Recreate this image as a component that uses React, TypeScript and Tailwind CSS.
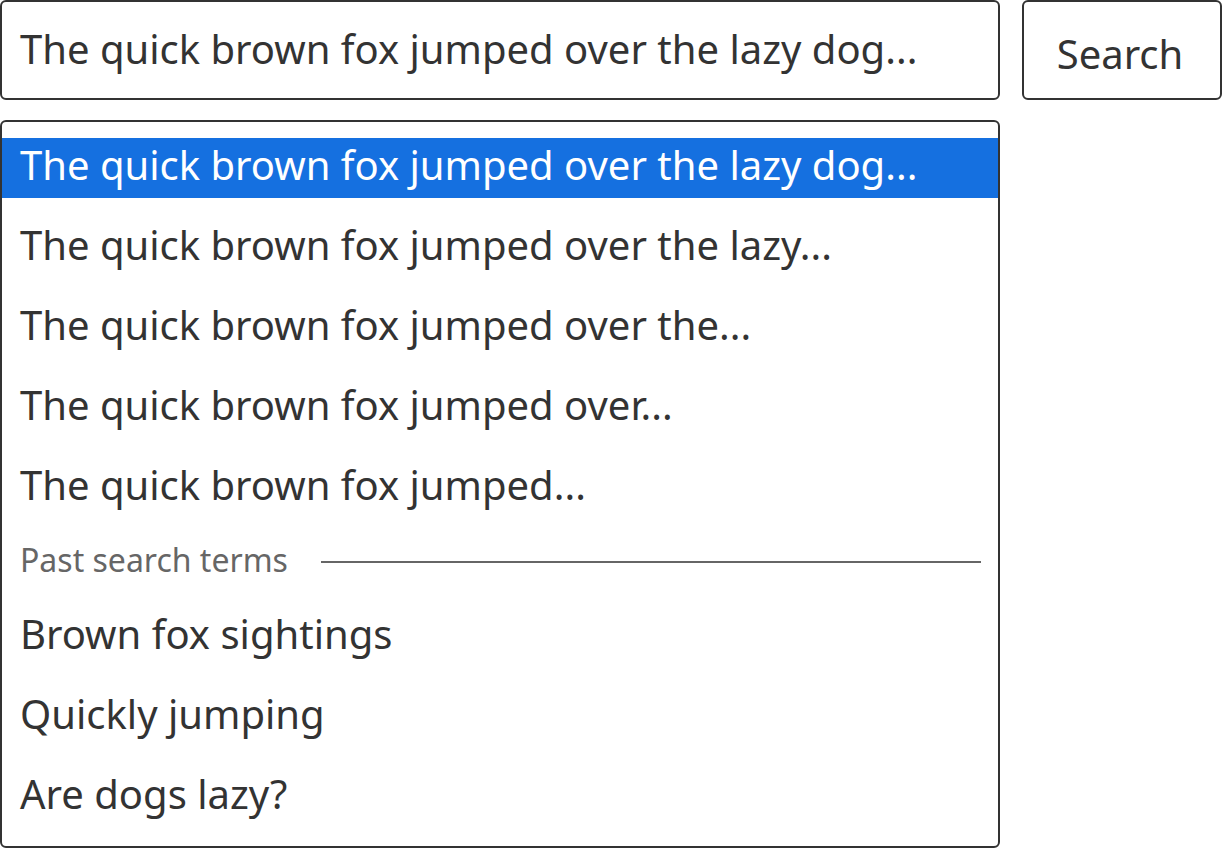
const suggestions = [
  "The quick brown fox jumped over the lazy dog...",
  "The quick brown fox jumped over the lazy...",
  "The quick brown fox jumped over the...",
  "The quick brown fox jumped over...",
  "The quick brown fox jumped...",
];

const pastTerms = ["Brown fox sightings", "Quickly jumping", "Are dogs lazy?"];

export default function App() {
  return (
    <div
      className="flex h-[848px] w-[1222px] gap-[22px] bg-white text-[#333]"
      style={{ fontFamily: '"Noto Sans", "Open Sans", sans-serif' }}
    >
      <div className="flex w-[1000px] flex-col gap-5">
        {/* 入力欄 */}
        <div className="flex h-[100px] items-center rounded-md border-2 border-[#333] px-[18px] pb-[2px] text-[40px]">
          The quick brown fox jumped over the lazy dog...
        </div>

        {/* 候補リスト */}
        <div className="flex flex-1 flex-col gap-5 rounded-md border-2 border-[#333] pt-4 pb-[18px]">
          {suggestions.map((s, i) => (
            <div
              key={s}
              className={
                i === 0
                  ? "flex h-[60px] items-center bg-[#1570e0] px-[18px] pb-[6px] text-[40px] text-white"
                  : "flex h-[60px] items-center px-[18px] pb-[6px] text-[40px]"
              }
            >
              {s}
            </div>
          ))}

          <div className="flex h-[49px] items-center gap-[33px] pr-[17px] pl-[18px]">
            <span className="mb-[6px] text-[32px] text-[#666]">Past search terms</span>
            <div className="mb-[2px] h-[2px] flex-1 bg-[#666]" />
          </div>

          {pastTerms.map((t) => (
            <div key={t} className="flex h-[60px] items-center px-[18px] pb-[6px] text-[40px]">
              {t}
            </div>
          ))}
        </div>
      </div>

      <button className="flex h-[100px] w-[200px] items-center justify-center rounded-md border-2 border-[#333] pt-[8px] pr-[4px] text-[40px]">
        Search
      </button>
    </div>
  );
}
